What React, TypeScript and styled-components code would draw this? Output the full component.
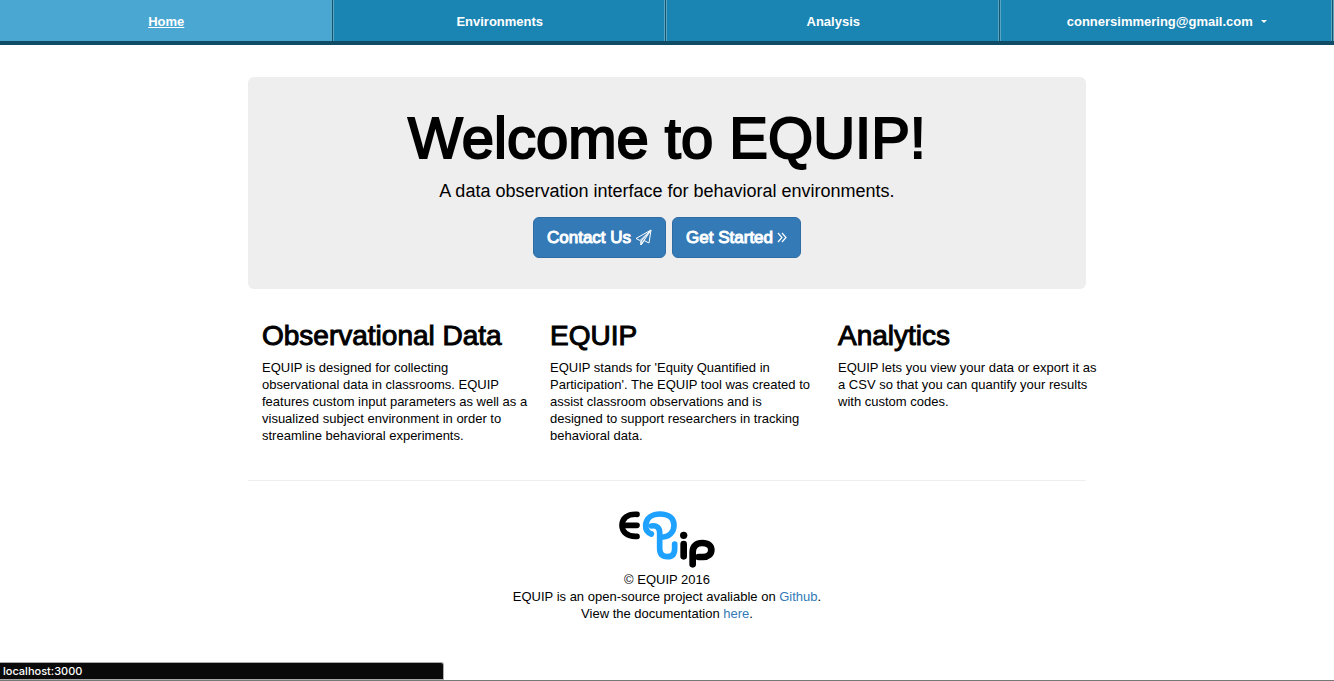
import React from 'react';
import styled, { createGlobalStyle, css } from 'styled-components';

const GlobalStyle = createGlobalStyle`
  * { box-sizing: border-box; }
  html, body, #root { height: 100%; }
  body {
    margin: 0;
    background: #fff;
    color: #000;
    font: 13px/17px "Liberation Sans", Arial, sans-serif;
  }
`;

const Page = styled.div`
  min-height: 100%;
  display: flex;
  flex-direction: column;
`;

const Nav = styled.nav`
  display: grid;
  grid-template-columns: repeat(4, 1fr);
  height: 45px;
  background: #1a84b2;
  border-bottom: 4px solid #114c66;
`;

const navItem = css<{ $active?: boolean }>`
  display: flex;
  align-items: center;
  justify-content: center;
  gap: 8px;
  padding: 2px 0 0;
  border: 0;
  border-right: 1px solid #5ba5c2;
  box-shadow: inset -1px 0 #12566f, inset -2px 0 #5ba5c2;
  background: ${(p) => (p.$active ? '#49a7d2' : '#1a84b2')};
  color: #fff;
  font: bold 13px/17px "Liberation Sans", Arial, sans-serif;
  text-decoration: ${(p) => (p.$active ? 'underline' : 'none')};
`;
const NavLink = styled.a<{ $active?: boolean }>`${navItem}`;
const NavButton = styled.button<{ $active?: boolean }>`${navItem}`;

const Caret = styled.span`
  border: 3px solid transparent;
  border-top-color: #fff;
  border-bottom: 0;
`;

const Container = styled.main`
  width: 100%;
  max-width: 838px;
  margin: 0 auto;
  padding-top: 32px;
`;

const Jumbotron = styled.section`
  display: flex;
  flex-direction: column;
  align-items: center;
  padding: 29px 16px 31px;
  border-radius: 6px;
  background: #eee;
`;

const Title = styled.h1`
  margin: 0;
  font-size: 58px;
  line-height: 64px;
  font-weight: 400;
  -webkit-text-stroke: 2px #000;
`;

const Lead = styled.p`
  margin: 8px 0 13px;
  font-size: 18px;
  line-height: 26px;
`;

const Actions = styled.div`
  display: flex;
  gap: 6px;
`;

const Button = styled.button`
  display: flex;
  align-items: center;
  gap: 4px;
  height: 41px;
  padding: 0 13px;
  border: 1px solid #2e6da4;
  border-radius: 6px;
  background: #337ab7;
  color: #fff;
  font: 17px/22px "Liberation Sans", Arial, sans-serif;
  white-space: nowrap;
  -webkit-text-stroke: 1px #fff;
`;

const Columns = styled.section`
  display: grid;
  grid-template-columns: repeat(3, 1fr);
  gap: 22px;
  margin: 31px -18px 36px 14px;
`;

const Divider = styled.hr`
  margin: 0;
  border: 0;
  border-top: 1px solid #eee;
`;

const Heading = styled.h2`
  margin: 0 0 8px;
  font-size: 28px;
  line-height: 31px;
  font-weight: 400;
  white-space: nowrap;
  -webkit-text-stroke: 1px #000;
`;

const Text = styled.p`
  margin: 0;
`;

const Footer = styled.footer`
  display: flex;
  flex-direction: column;
  align-items: center;
  padding-top: 29px;
  text-align: center;
`;

const Link = styled.a`
  color: #337ab7;
  text-decoration: none;
`;

const StatusBar = styled.div`
  position: fixed;
  left: 0;
  right: 0;
  bottom: 0;
  border-bottom: 1px solid #777;
`;

const StatusText = styled.div`
  width: 444px;
  height: 18px;
  padding: 0 3px;
  border: 1px solid #aaa;
  border-left: 0;
  border-top-right-radius: 3px;
  background: #0a0a0a;
  color: #fff;
  font: 500 11px/16px Inter, "Liberation Sans", sans-serif;
`;

const PlaneIcon = () => (
  <svg width="17" height="17" viewBox="0 0 17 17" fill="none" stroke="#fff" strokeWidth="1" strokeLinejoin="round" aria-hidden="true">
    <path d="M16 1 1 9.500l4 2L16 1l-2 13-5-2.500-3 4.500v-4" />
    <path d="M16 1 9 11.500 6 16v-4L16 1Z" fill="#fff" fillOpacity=".35" />
  </svg>
);

const ChevronsIcon = () => (
  <svg width="10" height="11" viewBox="0 0 10 11" fill="none" stroke="#fff" strokeWidth="1.200" aria-hidden="true">
    <path d="m1 1 4 4.500L1 10M5 1l4 4.500L5 10" />
  </svg>
);

const LogoImage = styled.svg`
  margin-bottom: 2px;
`;

const Logo = () => (
  <LogoImage width="98" height="59" viewBox="54 45 294 177" fill="none" strokeLinecap="round" strokeLinejoin="round" role="img" aria-label="EQUIP">
    <g stroke="#000" strokeWidth="17">
      <path d="M111 58C82 56 66 71 66 91s16 35 45 33M67 91h44" />
      <path strokeWidth="20" d="M251 147v37M278 208v-37c0-17 11-27 29-27s27 9 27 21-10 21-25 21h-13" />
    </g>
    <circle cx="251" cy="121" r="11" fill="#000" />
    <path stroke="#1ea1ff" strokeWidth="17" d="M154 117C141 112 136 102 137 90c2-21 20-33 43-33 26 0 42 13 42 33 0 22-15 35-32 36M154 93c16-3 25 5 25 21v46c0 17 8 25 23 25s22-9 22-24v-14" />
  </LogoImage>
);

const features = [
  { title: 'Observational Data', text: 'EQUIP is designed for collecting observational data in classrooms. EQUIP features custom input parameters as well as a visualized subject environment in order to streamline behavioral experiments.' },
  { title: 'EQUIP', text: "EQUIP stands for 'Equity Quantified in Participation'. The EQUIP tool was created to assist classroom observations and is designed to support researchers in tracking behavioral data." },
  { title: 'Analytics', text: 'EQUIP lets you view your data or export it as a CSV so that you can quantify your results with custom codes.' },
];

export default function App() {
  return (
    <Page>
      <GlobalStyle />
      <Nav>
        <NavLink href="#home" $active>Home</NavLink>
        <NavLink href="#environments">Environments</NavLink>
        <NavLink href="#analysis">Analysis</NavLink>
        <NavButton type="button">connersimmering@gmail.com <Caret /></NavButton>
      </Nav>
      <Container>
        <Jumbotron>
          <Title>Welcome to EQUIP!</Title>
          <Lead>A data observation interface for behavioral environments.</Lead>
          <Actions>
            <Button type="button">Contact Us <PlaneIcon /></Button>
            <Button type="button">Get Started <ChevronsIcon /></Button>
          </Actions>
        </Jumbotron>
        <Columns>
          {features.map((f) => (
            <article key={f.title}>
              <Heading>{f.title}</Heading>
              <Text>{f.text}</Text>
            </article>
          ))}
        </Columns>
        <Divider />
        <Footer>
          <Logo />
          <Text>© EQUIP 2016</Text>
          <Text>EQUIP is an open-source project avaliable on <Link href="#github">Github</Link>.</Text>
          <Text>View the documentation <Link href="#docs">here</Link>.</Text>
        </Footer>
      </Container>
      <StatusBar>
        <StatusText>localhost:3000</StatusText>
      </StatusBar>
    </Page>
  );
}
